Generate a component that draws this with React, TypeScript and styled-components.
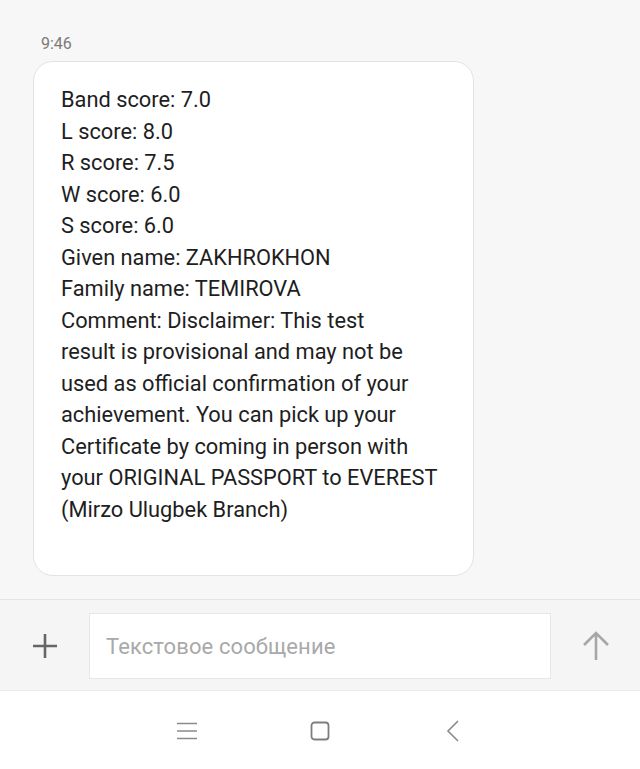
import React from "react";
import styled, { createGlobalStyle } from "styled-components";

const Global = createGlobalStyle`
  html, body { margin: 0; padding: 0; background: #f7f7f7; }
  body { font-family: Roboto, "Noto Sans", sans-serif; }
`;

const Screen = styled.div`
  display: flex;
  flex-direction: column;
  height: 769px;
  width: 640px;
  background: #f7f7f7;
`;

const Thread = styled.div`
  flex: 1;
  display: flex;
  flex-direction: column;
  padding: 34px 0 0 33px;
`;

const Time = styled.div`
  font-size: 16px;
  color: #7a7a7a;
  margin-left: 8px;
  line-height: 20px;
  margin-bottom: 7px;
`;

const Bubble = styled.div`
  box-sizing: border-box;
  width: 441px;
  height: 515px;
  background: #ffffff;
  border: 1px solid #e3e3e3;
  border-radius: 20px;
  padding: 22px 0 0 27px;
`;

const Line = styled.div`
  font-size: 21.8px;
  line-height: 31.5px;
  color: #1e1e1e;
  white-space: nowrap;
`;

const Composer = styled.div`
  height: 92px;
  box-sizing: border-box;
  border-top: 1px solid #e4e4e4;
  border-bottom: 1px solid #ececec;
  background: #f5f5f5;
  display: flex;
  align-items: center;
  padding-top: 2px;
`;

const IconSlot = styled.div<{ $w: number }>`
  width: ${(p) => p.$w}px;
  display: flex;
  justify-content: center;
  align-items: center;
`;

const Input = styled.div`
  box-sizing: border-box;
  width: 462px;
  height: 66px;
  background: #fff;
  border: 1px solid #e6e6e6;
  display: flex;
  align-items: center;
  padding-left: 16px;
  font-size: 22px;
  letter-spacing: 0.1px;
  color: #a9a9a9;
`;

const NavBar = styled.div`
  height: 76px;
  background: #ffffff;
  display: flex;
  justify-content: center;
  align-items: center;
  padding-top: 2px;
`;

const NavItem = styled.div`
  width: 133px;
  display: flex;
  justify-content: center;
  align-items: center;
`;

const lines = [
  "Band score: 7.0",
  "L score: 8.0",
  "R score: 7.5",
  "W score: 6.0",
  "S score: 6.0",
  "Given name: ZAKHROKHON",
  "Family name: TEMIROVA",
  "Comment: Disclaimer: This test",
  "result is provisional and may not be",
  "used as official confirmation of your",
  "achievement. You can pick up your",
  "Certificate by coming in person with",
  "your ORIGINAL PASSPORT to EVEREST",
  "(Mirzo Ulugbek Branch)",
];

export default function App() {
  return (
    <>
      <Global />
      <Screen>
        <Thread>
          <Time>9:46</Time>
          <Bubble>
            {lines.map((l) => (
              <Line key={l}>{l}</Line>
            ))}
          </Bubble>
        </Thread>
        <Composer>
          <IconSlot $w={89}>
            <svg width="28" height="28" viewBox="0 0 28 28">
              <path d="M14 2v24M2 14h24" stroke="#666" strokeWidth="2.6" />
            </svg>
          </IconSlot>
          <Input>Текстовое сообщение</Input>
          <IconSlot $w={89}>
            <svg width="30" height="32" viewBox="0 0 30 32">
              <path d="M15 3v27M3 15L15 3l12 12" stroke="#a6a6a6" strokeWidth="2.6" fill="none" />
            </svg>
          </IconSlot>
        </Composer>
        <NavBar>
          <NavItem>
            <svg width="22" height="18" viewBox="0 0 22 18">
              <path d="M1 1.5h20M1 9h20M1 16.5h20" stroke="#8a8a8a" strokeWidth="1.6" />
            </svg>
          </NavItem>
          <NavItem>
            <svg width="20" height="20" viewBox="0 0 20 20">
              <rect x="1.5" y="1.5" width="17" height="17" rx="3" stroke="#7e7e7e" strokeWidth="1.8" fill="none" />
            </svg>
          </NavItem>
          <NavItem>
            <svg width="14" height="22" viewBox="0 0 14 22">
              <path d="M12 1L2 11l10 10" stroke="#8a8a8a" strokeWidth="1.6" fill="none" />
            </svg>
          </NavItem>
        </NavBar>
      </Screen>
    </>
  );
}
